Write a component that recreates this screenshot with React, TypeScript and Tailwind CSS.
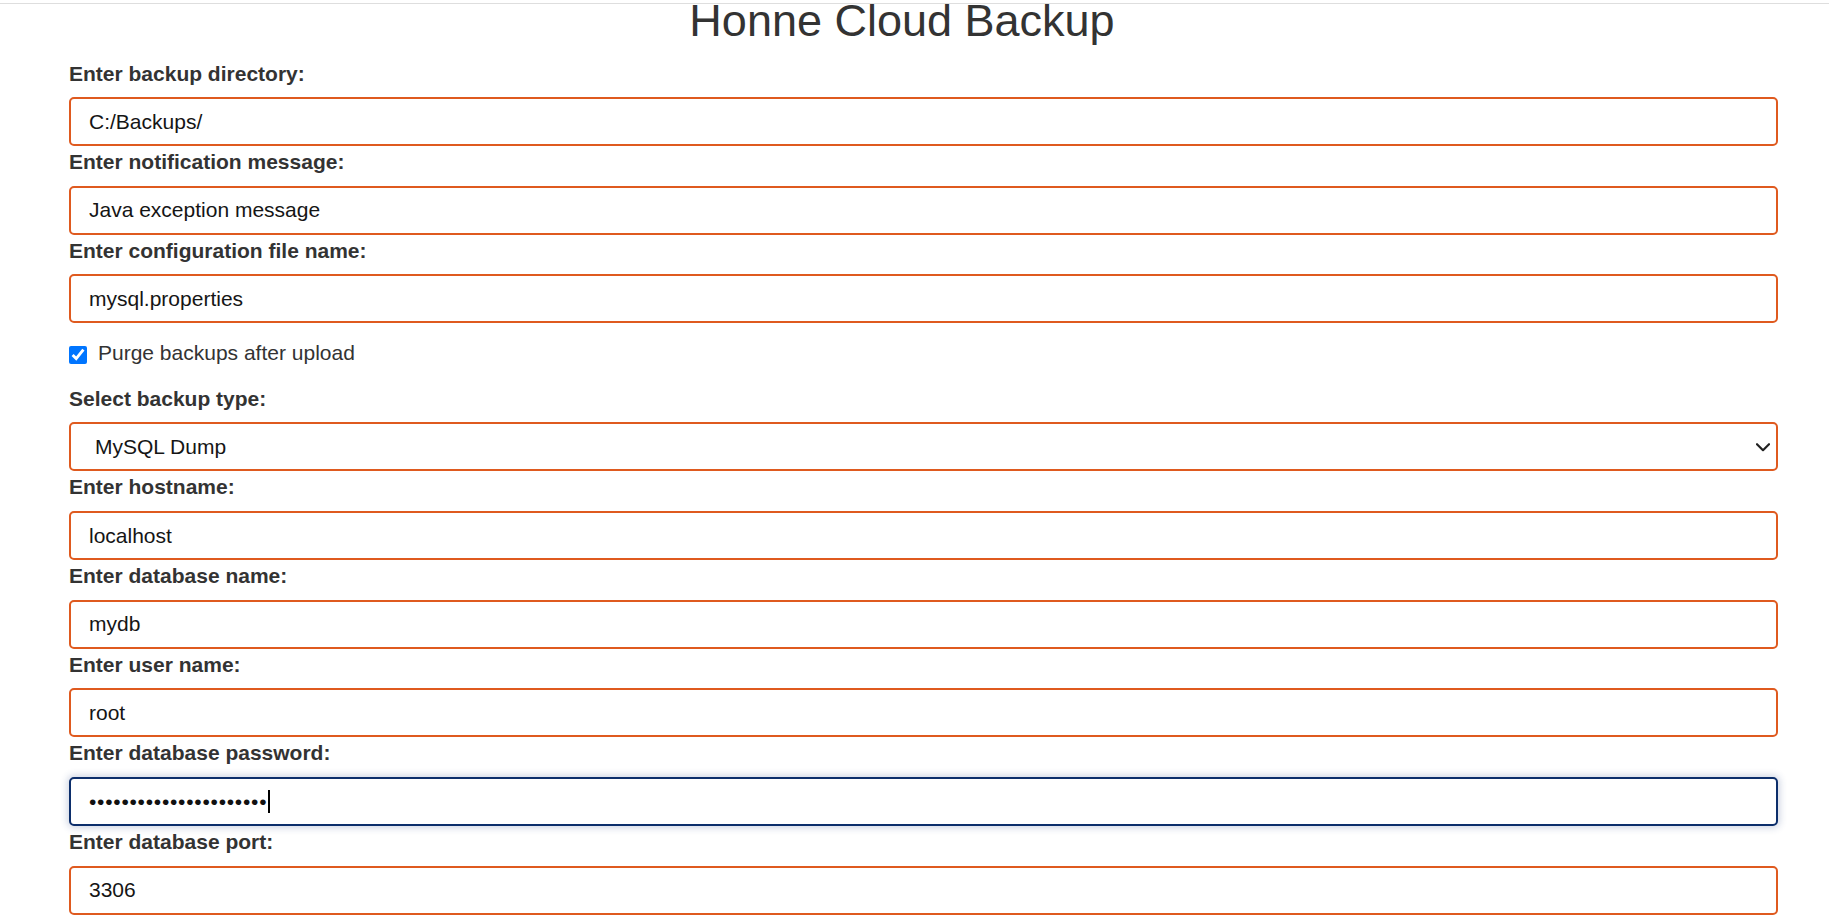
import React from "react";

const font = { fontFamily: '"Liberation Sans", Arial, sans-serif' };

function Field({ label, value }: { label: string; value: string }) {
  return (
    <div>
      <label className="block text-[21px] leading-[32.3px] font-bold text-[#333333] mb-[7.35px]">{label}</label>
      <input
        type="text"
        defaultValue={value}
        readOnly
        className="block w-full h-[49px] border-2 border-[#df5a1f] rounded-[5px] px-[18px] text-[21px] text-[#151515] bg-white outline-none"
      />
    </div>
  );
}

export default function App() {
  return (
    <div className="w-full min-h-screen bg-white overflow-hidden" style={font}>
      <div className="h-[4px] border-b border-[#dedede]" />
      <h1 className="text-center pr-[25px] text-[45px] leading-[37px] mt-[-2px] text-[#333333] font-normal">
        Honne Cloud Backup
      </h1>
      <form className="pl-[69px] pr-[51px] mt-[18.5px]">
        <Field label="Enter backup directory:" value="C:/Backups/" />
        <Field label="Enter notification message:" value="Java exception message" />
        <Field label="Enter configuration file name:" value="mysql.properties" />

        <div className="flex items-center mt-[14px] mb-[13px] h-[32.3px]">
          <input type="checkbox" defaultChecked className="w-[18px] h-[18px] accent-[#0075ff] mt-[3px]" />
          <span className="ml-[11px] text-[21px] leading-[32.3px] text-[#333333]">Purge backups after upload</span>
        </div>

        <div>
          <label className="block text-[21px] leading-[32.3px] font-bold text-[#333333] mb-[7.35px]">Select backup type:</label>
          <div className="relative">
            <select
              defaultValue="mysql"
              className="block w-full h-[49px] border-2 border-[#df5a1f] rounded-[5px] pl-[24px] pr-[40px] text-[21px] text-[#151515] bg-white appearance-none outline-none"
            >
              <option value="mysql">MySQL Dump</option>
              <option value="files">Files</option>
            </select>
            <svg
              className="absolute right-[8px] top-[21px] pointer-events-none"
              width="14"
              height="9"
              viewBox="0 0 14 9"
              fill="none"
            >
              <path d="M1 1.2 L7 7.2 L13 1.2" stroke="#222" strokeWidth="2.2" strokeLinecap="round" strokeLinejoin="round" />
            </svg>
          </div>
        </div>

        <Field label="Enter hostname:" value="localhost" />
        <Field label="Enter database name:" value="mydb" />
        <Field label="Enter user name:" value="root" />

        <div>
          <label className="block text-[21px] leading-[32.3px] font-bold text-[#333333] mb-[7.35px]">Enter database password:</label>
          <div className="flex items-center w-full h-[49px] border-2 border-[#0c2e6b] rounded-[5px] px-[18px] bg-white shadow-[0_0_7px_2px_rgba(40,70,130,0.22)]">
            <span className="text-[21px] text-[#111] tracking-[0.75px] leading-none">{"•".repeat(22)}</span>
            <span className="inline-block w-[2px] h-[23px] bg-black ml-[1px]" />
          </div>
        </div>

        <Field label="Enter database port:" value="3306" />
      </form>
    </div>
  );
}
